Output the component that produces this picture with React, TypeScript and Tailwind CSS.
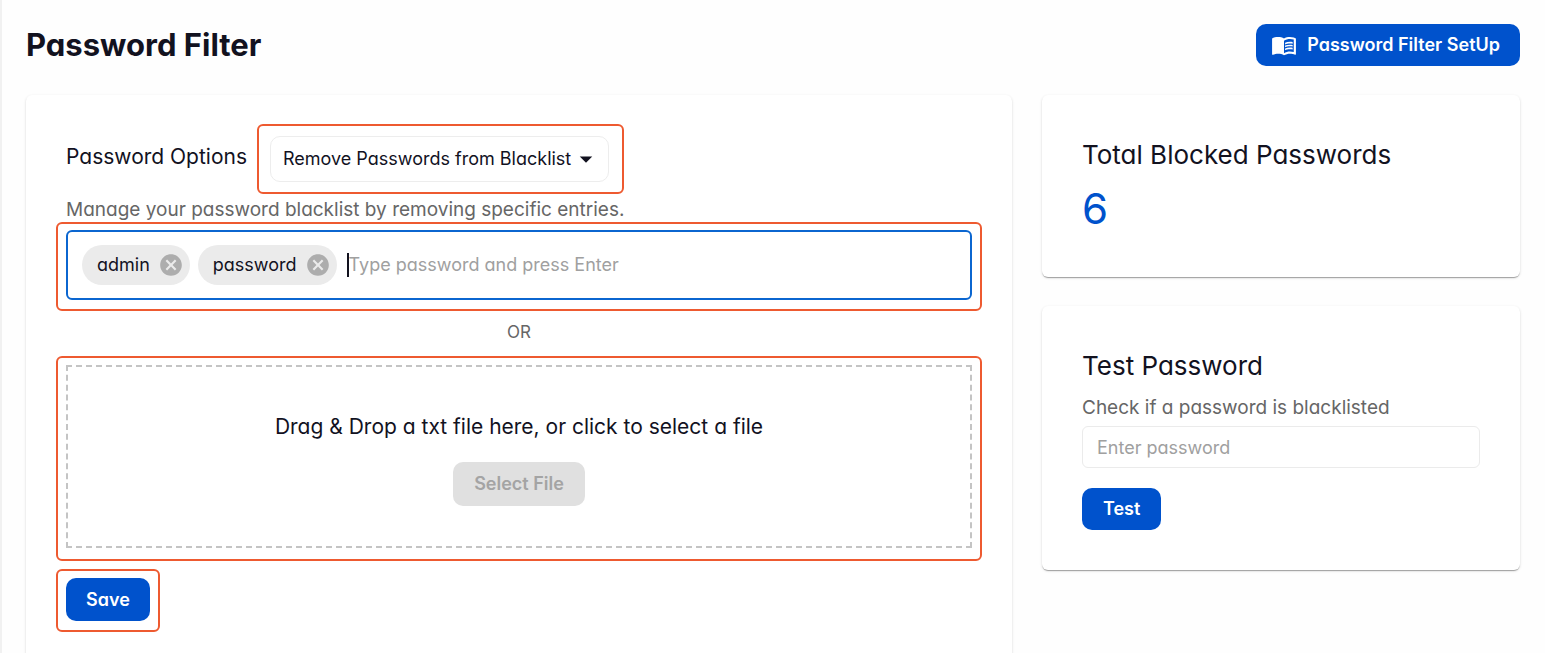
import { useState } from 'react';
import type { KeyboardEvent, ReactNode } from 'react';
import { MdArrowDropDown, MdCancel, MdMenuBook } from 'react-icons/md';

const options = [
  { value: 'remove', label: 'Remove Passwords from Blacklist' },
  { value: 'add', label: 'Add Passwords to Blacklist' },
];

function Card({ children, className = '' }: { children: ReactNode; className?: string }) {
  return (
    <section
      className={`rounded-md bg-white shadow-[0_2px_1px_-1px_rgba(0,0,0,0.2),0_1px_1px_0_rgba(0,0,0,0.14),0_1px_3px_0_rgba(0,0,0,0.12)] ${className}`}
    >
      {children}
    </section>
  );
}

function Highlight({ children, className = '' }: { children: ReactNode; className?: string }) {
  return <div className={`rounded-md border-2 border-[#ee5a30] ${className}`}>{children}</div>;
}

function Chip({ label, onRemove }: { label: string; onRemove: () => void }) {
  return (
    <span className="flex h-10 items-center gap-2 rounded-full bg-[#ebebeb] pr-1.5 pl-[15px] text-lg">
      {label}
      <button type="button" aria-label={`Remove ${label}`} onClick={onRemove}>
        <MdCancel className="size-[26px] text-[#adadad]" />
      </button>
    </span>
  );
}

export default function App() {
  const [option, setOption] = useState('remove');
  const [passwords, setPasswords] = useState(['admin', 'password']);
  const [entry, setEntry] = useState('');

  const handleKeyDown = (e: KeyboardEvent<HTMLInputElement>) => {
    if (e.key === 'Enter' && entry.trim()) {
      setPasswords([...passwords, entry.trim()]);
      setEntry('');
    }
  };

  return (
    <div className="h-screen overflow-hidden border-l-2 border-[#f1f1f1] bg-[#fefefe] pt-6 pr-[25px] pl-6 font-['Inter',sans-serif] text-[#12121f] [font-feature-settings:'cv11']">
      {/* Header */}
      <header className="flex items-center justify-between">
        <h1 className="text-[31px] leading-10 font-bold">Password Filter</h1>
        <button
          type="button"
          className="flex h-[42px] items-center gap-2.5 rounded-[10px] bg-[#0052cc] pr-5 pl-[15px] text-lg font-semibold text-white"
        >
          <MdMenuBook className="size-[26px]" />
          Password Filter SetUp
        </button>
      </header>

      <main className="mt-[29px] grid grid-cols-3 items-start gap-[30px]">
        {/* Blacklist form */}
        <Card className="col-span-2 px-[30px] pt-[29px] pb-10">
          <div className="flex items-center gap-2.5 pl-2.5">
            <label htmlFor="option" className="pb-1 text-[21px]">
              Password Options
            </label>
            <Highlight className="py-2.5 pr-[13px] pl-[11px]">
              <div className="relative">
                <select
                  id="option"
                  value={option}
                  onChange={(e) => setOption(e.target.value)}
                  className="h-[46px] w-[339px] appearance-none rounded-[10px] border border-[#ededed] bg-white px-3 text-lg"
                >
                  {options.map((o) => (
                    <option key={o.value} value={o.value}>
                      {o.label}
                    </option>
                  ))}
                </select>
                <MdArrowDropDown className="pointer-events-none absolute top-2 right-2 size-[30px]" />
              </div>
            </Highlight>
          </div>

          <p className="pt-1 pl-2.5 text-[19px] leading-6 text-[#666]">
            Manage your password blacklist by removing specific entries.
          </p>

          <Highlight className="px-2 pt-1.5 pb-[9px]">
            <div className="flex h-[70px] items-center gap-2 rounded-md border-2 border-[#0b66d0] px-3.5">
              {passwords.map((p) => (
                <Chip key={p} label={p} onRemove={() => setPasswords(passwords.filter((x) => x !== p))} />
              ))}
              <div className="ml-0.5 flex flex-1 items-center">
                <span className="h-6 w-0.5 bg-[#12121f]" />
                <input
                  type="text"
                  aria-label="Passwords to remove"
                  placeholder="Type password and press Enter"
                  value={entry}
                  onChange={(e) => setEntry(e.target.value)}
                  onKeyDown={handleKeyDown}
                  className="w-full text-lg caret-transparent outline-none placeholder:text-[#a0a0a0]"
                />
              </div>
            </div>
          </Highlight>

          <p className="pt-[9px] pb-3 text-center text-[17px] leading-6 text-[#666]">OR</p>

          {/* Drop zone */}
          <Highlight className="px-2 pt-[7px] pb-[11px]">
            <div className="flex h-[183px] flex-col items-center justify-center gap-5 border-2 border-dashed border-[#c4c4c4] pt-1">
              <p className="text-[21px] leading-[30px]">Drag &amp; Drop a txt file here, or click to select a file</p>
              <button
                type="button"
                disabled
                className="h-11 rounded-[10px] bg-[#e0e0e0] px-[21px] text-lg font-semibold text-[#a4a4a4]"
              >
                Select File
              </button>
            </div>
          </Highlight>

          <Highlight className="mt-2 w-fit px-2 pt-[7px] pb-[9px]">
            <button
              type="button"
              className="block h-[43px] rounded-[10px] bg-[#0052cc] px-5 text-lg font-semibold text-white"
            >
              Save
            </button>
          </Highlight>
        </Card>

        <div className="flex flex-col gap-[29px]">
          <Card className="p-10">
            <h2 className="text-[26px] leading-10">Total Blocked Passwords</h2>
            <p className="mt-1.5 text-[42px] leading-[56px] text-[#0052cc]">6</p>
          </Card>

          <Card className="p-10">
            <h2 className="text-[26px] leading-10">Test Password</h2>
            <label htmlFor="test" className="mt-2 block text-[19px] leading-7 text-[#666]">
              Check if a password is blacklisted
            </label>
            <input
              id="test"
              type="text"
              placeholder="Enter password"
              className="mt-1 h-[42px] w-full rounded-md border border-[#ebebeb] px-3.5 text-lg outline-none placeholder:text-[#a0a0a0]"
            />
            <button
              type="button"
              className="mt-5 block h-[42px] rounded-[10px] bg-[#0052cc] px-[21px] text-lg font-semibold text-white"
            >
              Test
            </button>
          </Card>
        </div>
      </main>
    </div>
  );
}
